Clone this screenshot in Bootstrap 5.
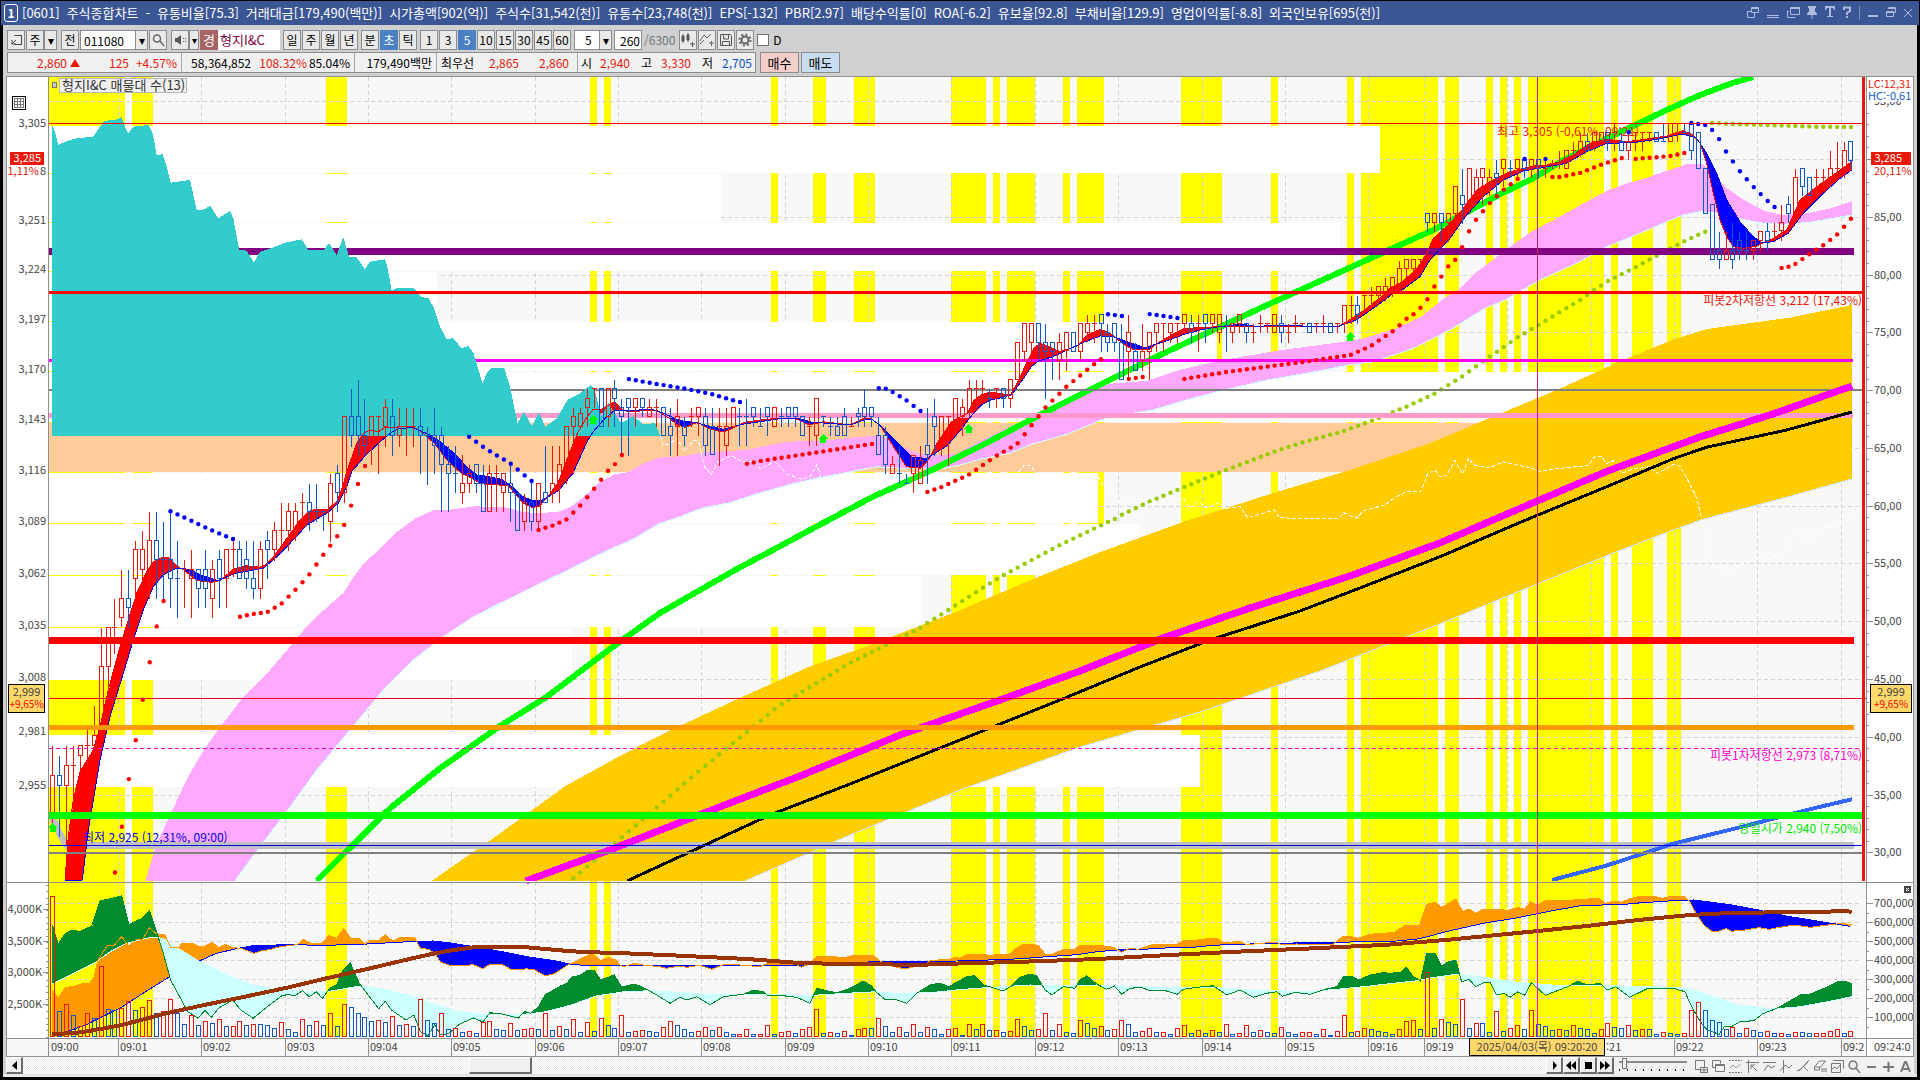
<!DOCTYPE html>
<html lang="ko">
<head>
<meta charset="utf-8">
<meta name="viewport" content="width=device-width, initial-scale=1">
<title>[0601] 주식종합차트</title>
<link rel="stylesheet" href="https://cdn.jsdelivr.net/npm/bootstrap@5.3.0/dist/css/bootstrap.min.css">
<style>
:root{--ui:"Noto Sans CJK KR",sans-serif}
body{background:#000;font-family:var(--ui);font-size:12px;line-height:16px;color:#000;padding:1px 1px 3px}
button,input,select{font-family:inherit;font-size:12px;line-height:16px}
.titlebar{background:#3a5694;color:#fff;height:24px;padding:0 4px 0 3px;font-size:13px}
.titlebar .fields{gap:7px;margin-left:4px;white-space:nowrap}
.titlebar .num{width:14px;height:18px;border:1px solid #fff;border-radius:3px;font-weight:bold;font-size:12px}
.winbtn{background:none;border:0;padding:0;color:#aebbdc;width:20px;height:20px;display:flex;align-items:center;justify-content:center}
.winbtn.w18{width:18px}.winbtn.w16{width:16px}.winbtn.w14{width:14px}
.frame{background:#d0d0d0;margin:0 2px}
.tool{height:27px;padding:5px 3px 2px 4px}
.tb{border:1px solid #8c8c8c;background:#e9e9e9;height:20px;width:18px;padding:0;margin-right:1px;color:#000;display:flex;align-items:center;justify-content:center}
.tb.on{background:#4a80c4;color:#fff;border-color:#4a80c4}
.tb.slim{width:13px;margin-left:-1px}
.tb.thin{width:10px;margin-left:-1px;font-size:10px}
.tf{border:1px solid #8c8c8c;background:#fff;height:20px;padding:0 3px;border-radius:0}
.code{width:56px}.cnt{width:28px;text-align:right;padding:0 1px}
.per{width:38px;appearance:none;padding-left:10px}
.arrowbox{width:13px;height:20px;margin-left:-13px;background:#e9e9e9;border:1px solid #8c8c8c;pointer-events:none}
.gap{width:3px}.gap2{width:2px}
.kind{background:#a86464;color:#fff;width:18px;height:20px;line-height:20px;font-size:13px}
.sname{background:#fff;color:#800040;width:62px;height:20px;line-height:20px;padding-left:2px;font-size:13px}
.quotes{height:22px;padding:0 4px;margin-bottom:2px}
.quotebox{width:749px;height:21px;border:1px solid #8c8c8c;background:#f0f0f0}
.quotebox span{white-space:nowrap;text-align:right}
.up{color:#e8190a}.dn{color:#0f4fc0}
.cut{border-left:1px solid #a8a8a8;height:19px;width:1px}
.order{height:21px;width:39px;border:1px solid #8c8c8c;padding:0;margin-left:4px;color:#000;font-size:13px}
.buy{background:#f4cfc9}.sell{background:#c8dcf0;margin-left:2px}
.chartbox{border:1px solid #909090;background:#fff;margin:0 3px}
.chartbox svg{display:block;width:100%;height:auto}
svg text{font-family:var(--ui)}
.scroller{height:17px;margin:0 3px;background:#f1f1f1}
.raised{background:#f0f0f0;border:1px solid #fff;border-right:2px solid #6c6c6c;border-bottom:2px solid #6c6c6c;padding:0;height:17px;width:17px;display:flex;align-items:center;justify-content:center}
.track{background:repeating-conic-gradient(#fff 0 25%,#ececec 0 50%) 0 0/2px 2px}
.thumb{width:63px;height:17px}
.speed{width:68px;height:14px;appearance:none;background:linear-gradient(#8a8a8a,#8a8a8a) 0 4px/100% 2px no-repeat,repeating-linear-gradient(90deg,#222 0 1px,transparent 1px 8px) 0 12px/100% 2px no-repeat;margin:0 6px 0 5px}
.speed::-webkit-slider-thumb{appearance:none;width:5px;height:11px;background:#f0f0f0;border:1px solid #777;margin-top:-2px}
.ico{background:none;border:0;padding:0;width:17px;height:17px;color:#777}
.foot{height:3px;background:#e8e8e8}
</style>
<script src="https://cdn.jsdelivr.net/npm/bootstrap@5.3.0/dist/js/bootstrap.bundle.min.js"></script>
</head>
<body>
<header class="titlebar d-flex align-items-center">
  <span class="num d-flex align-items-center justify-content-center">1</span>
  <div class="fields d-flex me-auto">
    <span>[0601]</span><span>주식종합차트</span><span>-</span><span>유통비율[75.3]</span><span>거래대금[179,490(백만)]</span><span>시가총액[902(억)]</span><span>주식수[31,542(천)]</span><span>유통수[23,748(천)]</span><span>EPS[-132]</span><span>PBR[2.97]</span><span>배당수익률[0]</span><span>ROA[-6.2]</span><span>유보율[92.8]</span><span>부채비율[129.9]</span><span>영업이익률[-8.8]</span><span>외국인보유[695(천)]</span>
  </div>
  <button class="winbtn" aria-label="분리"><svg width="16" height="16" fill="none" stroke="currentColor"><path d="M6.500 2.500h7v5h-7zM6 3.500h8M2.500 6.500H6M2.500 6v6.500h7V8"/></svg></button>
  <button class="winbtn" aria-label="내리기"><svg width="16" height="16" fill="none" stroke="currentColor"><path d="M2 10.500h12M2 12.500h12"/></svg></button>
  <button class="winbtn" aria-label="복제"><svg width="16" height="16" fill="none" stroke="currentColor"><path d="M5.500 2.500h9v7h-9zM5 3.500h9M2.500 6v6.500h8M2 6.500h2"/></svg></button>
  <button class="winbtn w18" aria-label="고정"><svg width="16" height="16" fill="currentColor"><path d="M4 1h8v2h-1v4h1l1 2v1H3V9l1-2h1V3H4zM7.500 10h1v4h-1z"/></svg></button>
  <button class="winbtn w18" aria-label="글꼴"><svg width="16" height="16" fill="currentColor"><path d="M3 1h10v4h-1l-1-2H9v8h2v1H5v-1h2V3H5L4 5H3z"/></svg></button>
  <button class="winbtn w16" aria-label="도움말"><svg width="14" height="16" fill="none" stroke="currentColor" stroke-width="2"><path d="M4 5V2.500h6V6L7 8v2M7 11v2"/></svg></button>
  <svg width="10" height="16"><path d="M4.500 1v14" stroke="#7f8fae"/></svg>
  <button class="winbtn w16" aria-label="최소화"><svg width="14" height="16" stroke="currentColor" stroke-width="2"><path d="M2 11h10"/></svg></button>
  <button class="winbtn" aria-label="이전 크기"><svg width="16" height="16" fill="none" stroke="currentColor"><path d="M5.500 2.500h7v5h-2M5 3.500h8M3.500 6.500h7v5h-7zM3 7.500h8"/></svg></button>
  <button class="winbtn w14" aria-label="닫기"><svg width="12" height="16" fill="none" stroke="currentColor"><path d="M2 4l8 8M10 4l-8 8"/></svg></button>
</header>
<main class="frame">
  <div class="tool d-flex align-items-center">
    <button class="tb" aria-label="목록"><svg width="14" height="14" fill="none" stroke="#444"><path d="M5.500 2.500h7v9h-7M3 11l4-4M3 7v4h4"/></svg></button>
    <button class="tb">주</button><button class="tb slim" aria-label="종류">▾</button>
    <span class="gap"></span><button class="tb">전</button>
    <input class="tf code" aria-label="종목코드" value="011080"><button class="tb slim" aria-label="종목 목록">▾</button>
    <button class="tb" aria-label="찾기"><svg width="14" height="14" fill="none" stroke="#666" stroke-width="1.500"><circle cx="6" cy="5.500" r="3.500"/><path d="M9 8l4 5"/></svg></button>
    <span class="gap"></span><button class="tb" aria-label="소리"><svg width="14" height="14" fill="#555"><path d="M2 5h2l4-3v10L4 9H2zM10 5h1v1h-1zM10 8h1v1h-1zM12 5h1v1h-1zM12 8h1v1h-1z"/></svg></button><button class="tb thin" aria-label="소리 설정">▾</button>
    <span class="kind text-center">경</span><span class="sname">형지I&amp;C</span>
    <span class="gap"></span><button class="tb">일</button><button class="tb">주</button><button class="tb">월</button><button class="tb">년</button>
    <span class="gap2"></span><button class="tb">분</button><button class="tb on">초</button><button class="tb">틱</button>
    <span class="gap2"></span><button class="tb">1</button><button class="tb">3</button><button class="tb on">5</button><button class="tb">10</button><button class="tb">15</button><button class="tb">30</button><button class="tb">45</button><button class="tb">60</button>
    <span class="gap2"></span><select class="tf per" aria-label="주기"><option>5</option></select><span class="arrowbox d-flex align-items-center justify-content-center">▾</span>
    <span class="gap2"></span><input class="tf cnt" aria-label="봉 개수" value="260"><span class="gap2"></span><span class="me-1 text-secondary">/6300</span>
    <button class="tb" aria-label="차트 추가"><svg width="16" height="16" fill="#555" stroke="#555"><path d="M2 4h2v5H2zM7 3h2v5H7zM3 2v9M8 1v9" /><path d="M10 12h5M12.500 10v5" fill="none"/></svg></button>
    <button class="tb" aria-label="지표 추가"><svg width="16" height="16" fill="none" stroke="#666"><path d="M1 9l4-6 3 3 4-4M1 12l4-4M10 11h5M12.500 9v5"/></svg></button>
    <button class="tb" aria-label="저장"><svg width="14" height="16" fill="none" stroke="#555"><path d="M1.500 2.500h10l1 1v10h-11zM4.500 3v4h5V3M3.500 13V9.500h7V13"/></svg></button>
    <button class="tb" aria-label="설정"><svg width="14" height="16" fill="none" stroke="#666"><circle cx="7" cy="8" r="3.500" stroke-width="2"/><circle cx="7" cy="8" r="5.500" stroke-width="2" stroke-dasharray="2 2.300"/></svg></button>
    <span class="gap2"></span><label class="d-flex align-items-center"><input type="checkbox" class="form-check-input rounded-0 m-0 me-1 border-secondary">D</label>
  </div>
  <div class="quotes d-flex">
    <div class="quotebox d-flex align-items-center">
      <span class="up" style="width:59px">2,860</span><svg width="16" height="12"><path d="M3 10L8 2l5 8z" fill="#e8190a"/></svg><span class="up" style="width:46px">125</span><span class="up" style="width:48px">+4.57%</span><i class="cut ms-1"></i>
      <span style="width:69px">58,364,852</span><span class="up" style="width:56px">108.32%</span><span style="width:43px">85.04%</span><i class="cut ms-1"></i>
      <span style="width:77px">179,490백만</span><i class="cut ms-1"></i>
      <span style="width:37px">최우선</span><span class="up" style="width:45px">2,865</span><span class="up" style="width:50px">2,860</span><i class="cut ms-2"></i>
      <span style="width:14px">시</span><span class="up" style="width:38px">2,940</span><span style="width:22px">고</span><span class="up" style="width:39px">3,330</span><span style="width:22px">저</span><span class="dn" style="width:39px">2,705</span>
    </div>
    <button class="order buy">매수</button><button class="order sell">매도</button>
  </div>
  <div class="chartbox"><svg id="chart" viewBox="7 77 1906 979" role="img" aria-label="형지I&amp;C 5초봉 차트"></svg></div>
  <div class="scroller d-flex align-items-start">
    <button class="raised" aria-label="왼쪽으로"><svg width="9" height="11"><path d="M7 1v9L2 5.500z"/></svg></button>
    <div class="track flex-grow-1 d-flex h-100"><div style="flex:446"></div><div class="raised thumb"></div><div style="flex:1013"></div></div>
    <button class="raised" aria-label="재생"><svg width="11" height="11"><path d="M4 1v9l4-4.500z"/></svg></button>
    <button class="raised" aria-label="뒤로"><svg width="12" height="11"><path d="M6 1v9L1 5.500zM11 1v9L6 5.500z"/></svg></button>
    <button class="raised" aria-label="정지"><svg width="11" height="11"><path d="M2 2h7v7H2z"/></svg></button>
    <button class="raised" aria-label="앞으로"><svg width="12" height="11"><path d="M1 1v9l5-4.500zM6 1v9l5-4.500z"/></svg></button>
    <input type="range" class="speed" aria-label="재생 속도" value="5">
    <span id="icons" class="d-flex"></span>
  </div>
  <div class="foot"></div>
</main>
<script>
const W = (w, d) => `<svg width="15" height="15" viewBox="0 0 15 15" fill="none" stroke="#777" stroke-width="${w}"><path d="${d}"/></svg>`;
document.getElementById('icons').innerHTML = [
  ['새 창', W(1, 'M1.500 1.500h9v7M1.500 1.500v9h5M6.500 8.500h7v5h-7zM10 8.500v5M6.500 11h7')],
  ['겹치기', W(1, 'M1.500 1.500h8v3M1.500 1.500v7h3M4.500 5.500h9v7h-9zM4 6.500h9')],
  ['영역', W(1, 'M1 1.500h13M1 13.500h13M2 9l3-3 3 3 5-4" stroke-dasharray="2 1')],
  ['기준선', W(1, 'M3.500 1v13M1 3.500h13M6 6l6 6M6 10V6h4')],
  ['추세', W(1, 'M1 3.500h13M2 12l4-6 3 3 4-2')],
  ['세로선', W(1, 'M4.500 1v13M1 12l5-6 4 3 3-3')],
  ['연필', W(1, 'M1 12l4-2 8-9M3 12l9-9M8 8l4 4')],
  ['지우개', W(1, 'M1.500 8l5-6h6l-5 6zM1.500 8v3h5V8M9 9v4M11 9v4M13 9v4')],
  ['그림', W(1, 'M3.500 1.500h10v8M1.500 4.500h9v9h-9zM2 10l3-2 2 2 3-4')],
  ['확대경', W(1.500, 'M6 2a4 4 0 1 0 .1 0M9 9l4 5')],
  ['축소', W(2, 'M3 8h9')],
  ['확대', W(2, 'M2 8h11M7.500 3v10')],
  ['글자', W(2, 'M3 13L7 3h1l4 10M5 10h5')]
].map(([n, s]) => `<button class="ico" aria-label="${n}">${s}</button>`).join('');

const out = [];
const RED = '#e8190a', BLUE = '#1058c8';
const cx = i => 52.5 + 6.944 * i;
/* Reads "x,y x,y ..." written on a local scale and returns chart points. */
const pts = (ox, oy, kx, ky, s) => s.trim().split(/\s+/).map(p => { const [x, y] = p.split(',').map(Number); return [ox + x / kx, oy + y / ky]; });
const A = s => pts(0, 460, 3, 3, s), B = s => pts(0, 60, 3, 3, s), C = s => pts(480, 350, 2.8, 3, s),
  D = s => pts(960, 280, 2.8, 3, s), E = s => pts(1400, 0, 3, 3, s), F = s => pts(1440, 280, 3, 2.613, s),
  G = s => pts(0, 870, 2.45, 3, s), H = s => pts(480, 880, 3, 3, s), I = s => pts(930, 880, 3, 3, s),
  J = s => pts(1380, 870, 2.9037, 3, s), P = s => pts(0, 0, 1, 1, s);
const join = a => 'M' + a.map(p => p[0].toFixed(1) + ' ' + p[1].toFixed(1)).join('L');
const add = s => out.push(s);
const rect = (x, y, w, h, f) => add(`<rect x="${x}" y="${y}" width="${w}" height="${h}" fill="${f}"/>`);
const line = (a, c, w, extra = '') => add(`<path d="${join(a)}" fill="none" stroke="${c}" stroke-width="${w}" ${extra}/>`);
const hline = (y, c, w, x2, extra) => line([[49, y], [x2, y]], c, w, extra);
const text = (x, y, s, c = '#444', anchor = 'start', size = 11) => add(`<text x="${x}" y="${y}" fill="${c}" text-anchor="${anchor}" font-size="${size}">${s}</text>`);
function at(a, x) {
  if (x <= a[0][0]) return a[0][1];
  for (let k = 1; k < a.length; k++) if (x <= a[k][0]) { const [p, q] = [a[k - 1], a[k]]; return p[1] + (q[1] - p[1]) * (x - p[0]) / ((q[0] - p[0]) || 1); }
  return a[a.length - 1][1];
}
/* Fills between two lines: one colour where a lies above b, another where it lies below. */
function cloud(a, b, up, down) {
  let u = '', d = '';
  const x2 = Math.min(a[a.length - 1][0], b[b.length - 1][0]);
  for (let x = Math.floor(Math.min(a[0][0], b[0][0])); x < x2; x++) {
    const p = Math.round(at(a, x)), q = Math.round(at(b, x));
    if (p < q) u += `M${x} ${p}h1v${q - p}h-1z`; else if (q < p) d += `M${x} ${q}h1v${p - q}h-1z`;
  }
  if (up) add(`<path d="${u}" fill="${up}"/>`);
  if (down) add(`<path d="${d}" fill="${down}"/>`);
}
function dots(a, c) {
  for (let i = 0; i < 260; i++) { const x = cx(i); if (x >= a[0][0] - 3 && x <= a[a.length - 1][0] + 3) add(`<circle cx="${x.toFixed(1)}" cy="${at(a, x).toFixed(1)}" r="2.2" fill="${c}" shape-rendering="auto"/>`); }
}

/* backgrounds and signal stripes */
rect(49, 77, 1817, 960, '#f8f8f8');
const stripes = [[49,125],[132,153],[326,347],[590,597],[604,611],[771,778],[813,826],[854,875],[951,986],[993,1000],[1007,1035],[1063,1070],[1077,1104],[1181,1222],[1271,1278],[1347,1354],[1361,1438],[1445,1459],[1486,1493],[1500,1507],[1514,1521],[1528,1604],[1611,1618],[1632,1653],[1667,1681]];
stripes.forEach(([a, b]) => rect(a, 77, b - a, 960, '#ffff00'));
/* grid */
const minutes = [[118,'09:01'],[201,'09:02'],[285,'09:03'],[368,'09:04'],[451,'09:05'],[535,'09:06'],[618,'09:07'],[701,'09:08'],[785,'09:09'],[868,'09:10'],[951,'09:11'],[1035,'09:12'],[1118,'09:13'],[1202,'09:14'],[1285,'09:15'],[1368,'09:16'],[1424,'09:19'],[1507,''],[1591,':21'],[1674,'09:22'],[1757,'09:23'],[1841,'09:2']];
const dash = 'stroke-dasharray="4 3"';
minutes.forEach(([x]) => line([[x + .5, 77], [x + .5, 1037]], '#d4d4d4', 1, dash));
for (let v = 30; v <= 95; v += 5) hline(Math.floor(852.8 - 11.555 * (v - 30)) + .5, '#d4d4d4', 1, 1862, dash);
[903,922,941,960,979,998,1017].forEach(y => hline(y + .5, '#d4d4d4', 1, 1862, dash));
/* volume profile */
const rows = [[125,1380],[173,721],[222,1340],[271,437],[321,1217],[371,1600],[422,1520],[472,1098],[523,1139],[575,921],[627,572],[680,49],[734,1200],[787,49]];
rows.slice(0, 13).forEach(([y, x], k) => rect(49, y + 1, x - 49, rows[k + 1][0] - y - 1, k === 6 ? '#ffcb99' : '#fff'));

/* gold and pink clouds */
const goldTop = [...P('431,881 500,833 565,786 612,760 660,735 735,700 808,667 875,643 955,612 1030,580 1100,552 1188,520 1226,508 1276,492 1340,473 1385,458 1424,445'), ...F('0,415 190,345 350,287 540,212 700,155 800,128 1050,98 1236,65')];
const goldBot = [...P('431,881 745,881 850,835 960,790 1080,747 1200,712 1320,671'), ...F('0,898 290,795 530,710 700,653 790,625 1000,577 1236,520')];
const pinkTop = [...A('435,1262 465,1160 500,1085 560,955 610,870 660,800 725,715 800,640 860,570 910,510 965,455 1030,397 1060,350 1090,310 1140,265 1190,215 1245,175 1300,150 1340,150 1430,138'), ...C('0,470 70,472 115,485 160,490 220,485 250,472 290,440 330,400 375,373 415,366 450,343 500,323 570,318 620,308 740,300 860,275 960,272 1050,262 1110,257 1140,265 1180,290 1230,312 1290,315 1330,312'), ...D('0,515 60,480 140,440 210,403 300,365 380,320 430,310 520,303 620,268 720,243 800,228 900,210 1090,183 1130,175 1220,145 1290,110 1360,50'), ...E('120,900 180,865 230,815 290,770 350,725 400,690 460,660 540,615 620,572 680,550 740,533 800,512 860,492 905,492 930,515 980,565 1030,600 1090,632 1145,645 1220,640 1290,625 1355,603')];
const pinkBot = [...A('435,1262 705,1262 780,1160 860,1055 950,930 1050,810 1150,690 1240,600 1330,530 1420,470 1500,430'), ...C('360,600 430,567 500,522 560,500 620,475 700,458 780,430 870,403 930,388 1000,373 1110,350 1180,355 1240,355 1300,355'), ...D('0,555 60,537 140,520 200,493 300,463 400,418 440,407 540,390 640,358 740,330 860,300 980,278 1090,255 1160,245 1270,205 1380,145 1470,85'), ...E('315,900 420,840 530,790 620,740 720,700 800,665 850,645 900,635 960,640 1010,655 1090,670 1150,673 1230,667 1300,655 1355,645')];
cloud(pinkTop, pinkBot, '#fea9fe'); line(pinkBot.slice(1), '#ccffff', 1);
cloud(goldTop, goldBot, '#ffcc00'); line(goldBot.slice(1), '#cce6ff', 1);

/* moving averages */
const green = [...A('950,1262 1170,1045 1320,925 1500,798'), ...P('545,698 618,643 660,613 700,590 735,570'), ...C('820,600 950,525 1100,440 1250,368 1340,320'), ...D('60,497 200,418 400,310 560,225 720,145 860,75 1015,0'), ...E('0,735 100,690 200,637 300,583 400,535 500,475 600,425 700,378 800,330 900,285 1000,248 1060,231')];
line([...A('158,1075 178,1120 200,1156'), [1854, 845.3]], '#c0c0c0', 7);
line([...P('1552,880'), ...F('500,1530 700,1473 900,1430 1100,1385 1236,1357')], '#3366ff', 4);
line(green, '#00ff00', 6);
const dotty = '#99cc00';
dots(P('570,881 640,822 700,770 780,705 850,663 920,628 1000,577 1060,545 1114,519'), dotty);
dots([...D('450,706 530,665 626,622 745,570 880,515 975,482 1070,455 1170,415 1250,380 1327,342 1405,290 1460,247 1560,173'), ...E('540,900 620,845 700,805 768,768 850,725 915,695')], dotty);
dots(E('937,369 1000,372 1100,375 1250,380 1355,381'), dotty);

/* red and blue trend cloud */
const fast = [...A('195,1260 205,1130 220,1020 240,935 280,870 300,800 325,690 360,560 385,480 410,400 440,335 460,305 490,291 510,295 530,318 551,330 592,362 634,367 660,362 700,328 740,317 780,322 800,312 820,290 850,250 900,180 925,155 946,148 980,150 1010,125 1030,75'), ...B('1040,1235 1070,1150 1090,1120 1110,1110 1135,1115 1156,1102 1240,1100 1270,1120 1303,1150 1340,1200 1384,1240 1426,1260'), ...C('0,401 80,407 105,440 125,462 145,472 165,470 190,440 220,395 250,310 275,245 300,200 317,178 340,178 376,155 400,180 416,185 494,180 530,205 553,225 575,232 609,217 640,235 667,243 690,243 740,217 800,208 860,204 890,208 922,225 960,215 1037,225 1076,203 1096,207 1120,225 1155,285 1194,350 1233,355 1255,330 1280,280 1320,215'), ...D('20,400 40,360 60,345 85,336 105,340 141,345 165,300 190,240 210,200 225,190 250,200 280,215 330,197 355,165 393,148 420,160 450,185 480,207 530,208 560,185 600,160 628,145 680,143 720,140 1060,140 1093,118 1130,92 1180,50 1210,20'), ...E('0,850 30,825 55,800 80,760 100,715 150,670 190,625 230,570 270,545 330,515 400,498 440,495 480,485 520,465 570,430 620,418 680,425 720,420 800,408 850,392 880,405 900,430 920,490 940,580 960,660 980,710 1000,740 1030,745 1070,738 1120,715 1160,690 1200,600 1250,560 1300,525 1355,485')];
const slow = [...A('195,1262 247,1260 265,1110 280,1020 300,900 330,770 370,640 400,540 430,450 460,380 490,345 530,325 570,328 610,348 655,362 700,342 740,334 790,325 830,290 880,240 920,195 980,160 1015,130 1040,80'), ...B('1055,1235 1093,1190 1135,1150 1177,1115 1200,1105 1240,1103 1290,1125 1320,1145 1363,1180 1400,1220 1430,1245'), ...C('0,375 60,388 90,410 120,440 150,452 175,450 220,422 260,370 300,275 317,245 350,205 376,182 420,182 480,177 514,190 560,212 600,217 650,230 680,238 740,222 840,206 890,205 930,217 1000,222 1037,225 1080,208 1100,210 1130,235 1180,290 1210,322 1250,325 1275,310 1310,285'), ...D('0,452 30,410 60,375 85,360 120,352 145,343 175,300 200,260 220,243 260,230 300,210 350,185 393,168 430,170 480,190 520,203 540,195 580,182 628,163 680,148 720,141 785,132 830,139 900,136 980,139 1060,139 1110,120 1170,75 1220,35'), ...E('0,875 60,830 90,780 150,715 200,645 250,590 310,540 370,513 440,500 500,490 560,455 620,430 700,428 770,418 850,402 890,415 920,460 950,520 980,600 1020,665 1060,710 1085,728 1120,725 1165,700 1210,640 1270,580 1320,535 1355,510')];
cloud(fast, slow, '#ff0000', '#0000ff');

/* price levels under the ratio area */
hline(251.5, '#800080', 7, 1854);
hline(360.5, '#ff00ff', 3, 1853);
hline(390, '#808080', 2, 1862);
hline(415.5, '#ff99cc', 5, 1853);

/* ratio area and its dashed tail */
const teal = [...B('156,195 165,215 175,255 200,243 230,235 280,230 300,200 315,182 345,180 365,172 375,200 385,220 400,200 445,195 458,220 470,285 488,283 500,320 512,368 570,360 590,450 615,448 630,437 655,475 690,453 700,475 718,570 740,572 762,607 780,575 820,562 860,547 905,538 925,570 970,570 988,550 1010,585 1030,532 1048,592 1070,592 1094,627 1110,605 1155,598 1163,625 1175,692 1190,684 1240,684 1265,712 1285,714 1300,740 1320,800 1340,837 1360,835 1385,865 1405,858 1420,878'), ...C('7,100 20,68 30,55 68,55 85,115 105,220 123,185 145,228 165,188 183,230 215,205 245,150 280,130 310,105 320,115 340,200 360,160 395,220 430,198 455,222 490,220 505,257')];
add(`<path d="${join(teal)}V436H52z" fill="#33cccc"/>`);
const wd = 'stroke-dasharray="4 2"';
line(C('505,257 512,285 530,283 552,265 572,303 600,270 612,275 628,350 648,373 665,335 705,318 735,335 765,333 785,357 825,335 860,372 900,388 925,380 943,345 955,382'), '#fff', 1, wd);
line(D('163,577 180,556 200,556 210,577'), '#fff', 1, wd);
line([...D('386,590 400,615 430,640 455,680 470,655 495,715 510,700 530,670 590,662 625,655 645,685 665,665 690,683 725,668 745,685 785,680 805,713 880,690 895,713 960,716 1060,716 1075,698 1110,715 1130,692 1190,675 1215,655 1250,635 1290,635 1310,580 1330,570'), ...F('0,515 20,510 45,472 68,507 85,467 105,485 150,490 190,475 240,485 270,490 300,500 350,493 445,485 465,460 485,462 500,480 520,472 545,505 575,495 625,488 655,505 700,482 720,487 745,525 770,570 790,640 820,750 880,755 950,725 985,732 1045,700 1068,645 1110,680 1130,652 1195,640 1215,615 1236,625')], '#fff', 1, wd);
line(fast, '#f00000', 1); line(slow, '#0000e0', 1);

/* candles: high, body top, body bottom, low */
const ups = [[0, 460, `855,946,1060,1100r 885,946,976,1128b 855,916,976,1155r 855,916,916,1035r 855,855,886,935r 795,855,855,915r 735,826,856,887r 502,619,797,825r 502,502,619,720r 415,502,502,580r 327,415,472,500r 327,415,442,503b 240,268,356,440r 210,268,328,415r 153,240,328,415r 153,240,298,415b 183,298,298,415b 153,298,355,443b 240,355,355,473b 298,327,327,443r 268,327,355,473r 327,327,386,443b 268,327,386,443b 298,327,415,473r 268,298,355,443b 268,268,355,443r 240,268,268,350r 240,268,355,355b 240,298,355,386b 240,355,386,415b 240,268,386,415r 210,240,268,356b 183,210,268,300r 126,211,211,270r 126,154,211,270r 126,154,211,240r 96,127,127,185r 69,127,153,212b 69,153,153,185b 153,155,155,212b 40,70,185,243r 12,40,97,155b -131,-131,97,128r`],
[43, 60, `984,1069,1126,1158b 957,1069,1126,1185b 1014,1126,1157,1185b 1069,1069,1157,1214r 1069,1069,1069,1241r 1014,1042,1099,1158r 1014,1069,1126,1185b 1041,1099,1126,1158r 1041,1099,1099,1185r 1041,1099,1099,1158r 1041,1099,1126,1241b 1099,1126,1126,1272b 1041,1126,1157,1241b 1099,1126,1214,1355b 1157,1214,1241,1355b 1155,1241,1241,1298b 1182,1270,1298,1329r 1212,1241,1270,1298r 1214,1214,1270,1298b 1212,1270,1355,1355b 1212,1241,1355,1355r 1212,1241,1241,1355r`],
[65, 350, `370,370,428,485r 343,401,427,515b 427,430,541,541b 430,457,515,541r 397,457,515,541b 400,400,515,541r 285,427,457,457b 285,400,427,457r 285,343,400,457r 230,230,343,400r 171,200,230,370r 171,190,230,230r 115,145,171,230r 115,115,115,171r 115,115,230,230b 115,115,200,230r 87,115,145,230b 145,171,200,315b 145,145,171,315b 145,145,171,230r 145,145,171,200b 145,171,200,200r 145,171,171,230r 171,171,256,256b 171,228,256,315b 145,200,230,315r 200,228,256,285b 171,200,200,230r 171,171,200,256r 171,200,285,315b 171,230,313,313b 171,230,230,345r 171,230,285,315r 171,171,230,230r 171,200,200,287b 145,200,200,287b 171,171,200,230b 171,230,230,230b 171,171,200,256b 171,171,230,230r 171,200,200,230b 171,171,200,230b 171,171,200,230b 200,200,256,256b 200,230,230,285r 145,145,256,287r 200,200,200,230b 200,230,230,256b 200,230,256,256b 171,200,256,256b 200,230,230,230r 171,190,200,230b 115,171,200,228b 171,171,200,230b 200,256,313,313b 230,256,343,370b 315,343,370,370r 285,370,370,400b 370,400,400,400b 315,315,370,428r 285,330,400,400r 171,285,313,400b 145,200,228,315b 200,200,285,315r 200,200,200,345r 145,145,230,256r 145,171,200,256r 87,115,187,200r 87,115,115,171r 87,115,115,145r 115,145,145,171b 115,115,115,171r 115,115,145,171b 87,87,145,171r`],
[139, 280, `187,187,297,297r 130,130,214,240r 130,130,187,240r 130,130,187,240b 130,187,214,356b 187,187,214,298b 157,187,240,298r 157,157,210,272r 157,157,214,214b 130,130,214,240r 103,130,157,185r 103,130,130,187r 103,103,130,214b 130,157,187,214b 130,130,187,214b 130,187,298,298b 103,157,214,298r 187,214,272,272b 130,214,240,272r 157,157,214,298r 130,130,157,214r 130,130,130,214r 130,130,157,187r 130,130,130,187r 103,103,130,157r 103,130,157,187b 103,130,130,214r 103,103,130,187b 103,103,130,157r 103,103,157,187r 103,135,135,214b 130,130,157,187r 103,103,130,157r 130,130,157,187b 130,157,157,187r 103,130,130,157r 130,130,130,157r 103,103,157,157r 103,130,157,187b 130,157,157,187r 103,130,130,157r 130,130,130,135r 130,130,157,157b 130,130,130,157r 103,130,130,157r 130,130,157,157b 130,130,130,157r 76,76,130,157r 46,76,76,130r 46,76,103,130b 46,46,46,100r 18,46,46,75r 18,18,46,70r -8,18,46,60r -10,-8,18,50r`],
[194, 0, `780,806,850,870r 778,778,805,830r 778,778,805,825r 778,778,778,805r 640,640,667,695b 640,640,667,695r 640,640,667,723b 640,640,667,723r 559,559,640,665r 504,586,614,670b 505,505,614,640r 505,532,586,614r 505,505,532,614r 505,532,559,586r 478,520,532,586b 478,478,505,559r 478,505,505,532b 478,478,505,532r 478,478,505,532b 478,478,505,532r 478,478,505,532b 478,505,505,532r 478,490,490,505r 450,490,490,505r 450,450,505,505r 424,450,450,478r 397,424,450,470r 397,424,450,450b 397,397,424,450r 397,397,424,424r 397,397,424,450b 370,397,397,450r 397,424,450,450b 397,424,450,478r 397,397,397,450r 397,397,397,450r 397,397,397,424r 397,397,424,424b 370,424,424,424b 370,370,424,424r 370,397,397,424r 370,397,397,397b 370,370,450,478b 397,397,505,505b 505,505,640,640b 613,613,778,778b 694,750,778,805b 694,750,778,778r 667,750,778,805b 694,720,750,778b 694,750,750,778b 720,720,750,778r 694,694,720,750r 667,694,720,750b 667,694,694,720r 613,667,690,720r 586,613,640,667b 505,532,640,640r 505,505,559,586b 532,532,586,586b 505,532,532,586r 505,532,532,559r 450,505,532,559r 424,505,505,532r 424,450,505,532r 424,424,480,505b`]];
const path = { r: '', b: '' };
ups.forEach(([first, oy, s]) => s.split(' ').forEach((t, n) => {
  const k = t.slice(-1), x = Math.floor(cx(first + n)), v = t.slice(0, -1).split(',').map(q => Math.floor(oy + q / 3) + .5);
  path[k] += `M${x + .5} ${v[0]}V${v[1]}M${x + .5} ${v[2]}V${v[3] + .5}`;
  path[k] += v[2] - v[1] < 2 ? `M${x - 2} ${v[1]}h5` : `M${x - 1.5} ${v[1]}h4V${v[2]}h-4z`;
}));
add(`<path d="${path.r}" fill="none" stroke="${RED}"/><path d="${path.b}" fill="none" stroke="${BLUE}"/>`);

/* stop-and-reverse dots */
[A('342,1257 363,1120 384,972 405,855 426,732 447,618 468,507 489,423'), [...A('717,471 760,462 802,456 843,432 886,390 927,345 967,288 1008,234 1029,204 1050,147 1071,81 1092,18')], C('163,540 200,528 240,510 278,470 317,420 356,365 376,345 396,315'), C('745,342 785,333 1096,282'), [...C('1252,426 1290,412 1367,375 1445,318 1504,282 1543,228'), ...D('238,384 297,321 353,272 373,255 393,238')], D('470,297 510,291'), [...D('627,297 745,276 980,243 1093,225 1150,198 1210,155'), ...E('0,975 21,955 50,937 81,900 102,861 123,831 144,800 165,780 186,743 204,699 225,663 267,612 310,570 352,537')], E('457,531 478,531 540,519 600,495 665,474'), E('705,477 811,468 853,459'), E('1143,804 1166,800 1186,792 1229,762 1271,735 1313,702 1334,678 1355,654')].forEach(a => dots(a, '#f00'));
[A('510,153 550,171 613,201 697,237'), [...B('1404,1128 1446,1158'), ...C('5,288 45,315 85,340 124,375 143,393')], C('415,87 494,102 570,115 648,132 726,156'), C('1115,115 1135,115 1155,126 1193,150 1232,183'), D('411,102 451,108'), D('530,102 608,114'), E('373,477 374,477'), E('436,477 437,477'), E('685,397 686,397'), E('873,369 915,375 937,390 957,417 977,453 998,483 1019,513 1061,561 1103,603 1122,621')].forEach(a => dots(a, '#00f'));
[[52.5,828],[593,420],[823,439],[968.5,429],[1350,337]].forEach(([x, y]) => add(`<path d="M${x} ${y - 5}l5 5h-2v4h-6v-4h-2z" fill="#00ff00"/>`));

/* long averages and levels above everything */
line([...P('526,881 615,848 704,813 800,776 900,735 1000,700 1080,671 1163,638 1250,608 1350,576'), ...F('0,687 290,578 500,500 780,410 1000,350 1236,277')], '#ff00ff', 7);
line([...P('627,881 770,815 850,784 960,740 1060,700 1140,667 1210,640 1300,611 1360,588'), ...F('0,723 230,637 500,540 700,467 800,437 1040,392 1236,345')], '#000', 3);
hline(123.5, '#ff0000', 1, 1862); hline(292.5, '#ff0000', 3, 1862);
hline(640.5, '#ff0000', 7, 1854); hline(698.5, '#f00028', 1, 1867);
hline(727.5, '#ff9900', 5, 1854); hline(748.5, '#ff00cc', 1, 1862, 'stroke-dasharray="4 3"');
hline(815.5, '#00ff00', 7, 1862); hline(845.5, '#0000e0', 1, 1862); hline(853, '#808080', 2, 1862);
text(83, 842, '최저 2,925 (12,31%, 09:00)', '#0000e8', 'start', 12); text(1497, 136, '최고 3,305 (-0,61%, 09:21)', RED, 'start', 12);
text(1862, 305, '피봇2차저항선 3,212 (17,43%)', RED, 'end', 12); text(1862, 760, '피봇1차저항선 2,973 (8,71%)', '#ff00cc', 'end', 12); text(1862, 833, '당일시가 2,940 (7,50%)', '#00e800', 'end', 12);
rect(1862, 77, 3, 804, RED);

/* lower pane */
rect(49, 881, 1817, 2, '#f8f8f8');
stripes.forEach(([a, b]) => rect(a, 881, b - a, 2, '#ffff00'));
const oA = [...G('128,360 143,383 160,352 180,350 195,343 205,340 220,340 230,322 240,270 262,228 280,226 298,200 316,228 334,210 350,208 366,173 385,193 403,193 418,232 438,232 447,219 470,219 485,229 502,229 520,217 536,233 552,223 570,233 590,235 622,250 640,243 665,238 680,232 700,228 728,224 742,207 760,220 790,220 805,197 825,205 842,175 860,206 880,206 893,222 906,212 928,210 945,194 962,214 980,202 1015,202 1030,235 1050,238 1065,250 1080,277 1100,285 1130,287 1160,284 1183,296 1200,283 1230,283 1250,297 1270,300 1290,296 1310,300 1337,318 1360,310 1395,282 1410,275 1425,265 1445,254 1455,255 1472,272 1490,262 1510,270'), ...H('415,252 430,260 465,250 490,255 540,260 560,265 600,258 620,262 660,256 695,268 730,254 770,254 840,260 870,246 905,246 950,255 965,262 990,250 1010,228 1050,228 1090,234 1120,226 1180,226 1200,243 1225,256 1275,267 1310,258 1340,250'), ...I('0,242 60,237 75,232 90,235 115,222 160,222 180,228 205,222 235,225 265,200 285,192 310,192 325,197 345,222 370,222 400,208 430,210 450,196 500,196 530,199 550,202 575,217 600,205 625,208 670,193 740,193 765,180 790,183 810,178 860,175 880,187 900,187 930,184 950,195 990,190 1040,187 1055,195 1100,192 1150,195 1210,193 1240,168 1265,170 1285,175 1310,166 1340,160'), ...J('0,190 40,188 75,165 115,165 135,103 160,97 178,112 200,100 220,87 240,125 258,117 278,130 300,117 345,117 370,122 400,112 420,118 438,95 455,105 480,93 560,90 635,85 655,100 680,93 700,97 730,85 760,78 790,78 820,85 850,78 885,80 900,95 920,135 940,165 965,185 985,183 1005,176 1020,184 1060,180 1100,173 1130,178 1200,165 1250,172 1300,165 1345,160 1370,165')];
const oB = [...G('128,497 160,487 210,465 250,440 300,410 350,370 400,332 440,300 490,272 530,250 580,236 620,227 700,224 800,226 900,222 1000,215 1060,213 1110,220 1180,234 1230,245 1300,262 1360,272 1395,282 1430,286'), ...H('415,256 840,257 950,256 1050,252 1165,246 1340,244'), ...I('0,245 80,243 240,238 300,234 380,228 440,224 500,215 560,210 640,208 720,203 790,202 850,196 920,193 1130,188 1320,185'), ...J('0,214 50,213 115,206 200,183 300,160 400,143 500,122 590,106 700,104 760,98 870,91 910,90 1010,103 1100,120 1180,138 1250,150 1310,160 1365,169')];
const gA = [...G('128,165 143,222 160,190 178,180 195,185 225,168 245,93 298,78 316,163 345,147 366,122 385,190 400,250 418,330 440,380 460,425 485,445 502,421 518,442 536,414 570,390 590,420 620,445 655,410 690,378 706,373 722,378 741,362 758,380 775,365 790,385 808,355 825,345 840,300 858,278 880,340 905,380 928,416 944,394 960,421 995,450 1014,435 1030,485 1048,497 1065,465 1080,495 1100,490 1125,463 1160,444 1183,456 1200,428 1230,432 1270,444 1285,424 1300,430 1320,410 1335,375 1370,350 1390,338 1402,320 1420,317 1440,300 1455,300 1472,330 1505,315'), ...H('425,321 465,312 500,328 530,345 570,370 600,352 620,360 650,350 690,374 730,350 790,343 820,330 850,335 865,348 890,345 950,352 990,370 1010,325 1040,332 1070,338 1110,325 1150,303 1175,318 1190,338 1215,358 1250,360 1280,370 1310,340 1345,318'), ...I('0,315 30,309 55,320 75,310 110,290 135,287 160,315 185,322 220,333 245,318 270,292 300,282 320,287 345,330 365,345 400,320 435,325 450,300 470,287 500,312 530,328 553,318 575,343 600,325 635,322 660,333 700,330 742,343 760,328 800,322 850,317 890,345 930,330 970,352 1010,340 1040,335 1057,349 1095,337 1140,343 1185,328 1220,320 1240,290 1265,288 1285,300 1320,285 1360,278'), ...J('30,310 60,307 77,292 95,318 118,333 135,252 160,250 178,288 200,275 220,270 237,335 258,328 278,350 300,338 320,338 338,375 360,370 378,382 400,365 420,376 440,338 480,376 545,350 575,333 600,345 640,340 660,360 685,350 725,382 780,354 850,354 885,365 905,410 930,455 950,480 985,493 1000,470 1020,470 1045,455 1085,452 1110,432 1145,418 1170,405 1220,375 1250,372 1300,350 1330,335 1350,333 1370,342')];
const gB = [...G('128,342 180,310 230,280 270,245 310,220 370,202 400,205 430,230 490,275 560,318 620,345 690,360 750,365 800,365 840,357 880,348 930,355 1000,375 1070,405 1120,424 1180,432 1290,432 1330,427 1400,405 1460,378 1520,367'), ...H('425,336 510,332 600,337 720,345 850,343 1000,346 1100,340 1190,335 1250,340 1340,338'), ...I('0,338 100,328 170,323 300,315 450,318 500,315 700,322 870,323 960,330 1130,335 1220,328 1340,316'), ...J('0,344 110,332 140,325 220,313 270,317 400,337 500,345 700,348 850,352 900,356 960,378 1040,405 1145,417 1220,410 1300,395 1370,380')];
const brown = [...G('128,493 200,487 300,465 400,432 500,405 600,380 700,354 800,325 900,297 1000,268 1050,254 1100,242 1160,232 1290,232 1400,244 1500,249'), ...H('415,219 600,227 800,237 960,249 1130,253 1340,254'), ...I('0,253 320,244 500,237 700,226 900,216 1150,205 1340,196'), ...J('0,226 200,209 450,184 600,168 750,150 900,135 1000,130 1190,126 1360,124 1370,127')];
cloud(oA, oB, '#ff9900', '#0000ff'); line(oB, '#0000ff', 1);
cloud(gA, gB, '#008c2e', '#ccffff'); line(gB, '#ccffff', 1); line(oA, '#ff9900', 1); line(gA, '#008c2e', 1);
const vol = '420r 75b 96r 63b 29r 69r 54b 210r 81b 79b 84r 104r 78b 87r 108r 69b 75r 111r 69b 36b 63r 33b 45r 39b 51r 30b 30r 45r 33b 36r 36b 33b 24b 42r 21b 12b 51r 33b 45r 33b 69r 30b 96r 87b 69b 57b 45b 48r 42b 60r 33b 36r 30b 111r 48b 39b 69r 21b 24r 12b 15r 9b 43r 46r 22b 19b 40r 19b 22r 25r 22b 70r 19b 31r 22b 52r 13b 43r 16b 55r 34b 25b 64r 13b 16r 19r 16b 13b 28r 46r 34b 22b 13b 16r 28r 19b 28r 13b 7b 7r 22r 7b 7r 34r 7b 13r 16r 10b 22r 28r 82r 10b 13r 10b 16r 3b 22r 25r 25b 55r 31b 13b 28r 13b 37r 13b 28r 22b 7b 22r 25r 3b 37r 22b 37r 19b 19r 13b 16r 52r 31b 19b 22r 70r 19b 37r 13b 10b 49r 40b 25b 31r 19b 22r 49r 37b 13b 16r 25r 13b 13r 7b 25r 34r 10b 19r 10b 19r 13b 37r 7b 10r 34r 13b 19r 13b 10b 28r 13b 7b 13r 13r 7b 22r 3b 16r 64r 13b 16r 25r 22b 16b 12b 6b 21r 45r 48r 21b 192r 24b 51r 42b 36b 111r 24b 39r 39b 12b 75r 15b 24r 33r 21b 78r 36b 30b 18b 21r 18b 33r 24b 21b 9b 21r 39r 27b 24b 33r 18b 21r 21b 6b 12r 9b 6b 9r 78r 102r 78b 48b 42b 21b 27r 9b 24r 18b 12b 15r 9b 9r 6b 12r 12b 9b 9r 9r 15r 21r 9b 15r'.split(' ');
const vb = { r: '', b: '' };
vol.forEach((t, i) => { const h = Math.max(1, Math.round(parseInt(t) / 3)), x = Math.floor(cx(i)); vb[t.slice(-1)] += `M${x - 1.5} 1036.500v-${h}h4v${h}z`; });
add(`<path d="${vb.r}" fill="none" stroke="${RED}"/><path d="${vb.b}" fill="none" stroke="${BLUE}"/>`);
line(brown, '#993300', 4);
line([[1537.5, 77], [1537.5, 882]], '#c0206c', 1); line([[1537.5, 882], [1537.5, 1037]], '#ff00ff', 1);

/* axes */
rect(7, 77, 41, 961, '#fff'); rect(1867, 77, 46, 979, '#fff'); rect(7, 1038, 1860, 18, '#f8f8f8');
const AX = '#909090';
line([[48.5, 77], [48.5, 1056]], AX, 1); line([[1866.5, 77], [1866.5, 1056]], AX, 1);
line([[7, 882.5], [1913, 882.5]], AX, 1); line([[7, 1038.5], [1913, 1038.5]], AX, 1);
[[3305,127],[3251,224],[3224,273],[3197,323],[3170,373],[3143,423],[3116,474],[3089,525],[3062,577],[3035,629],[3008,681],[2981,735],[2955,789]].forEach(([v, y]) => text(46, y, v.toLocaleString('en-US'), '#444', 'end'));
for (let k = 0; k <= 65; k++) { const y = Math.floor(852.8 - 11.555 * k) + .5; if (y > 102) line([[1867, y], [k % 5 ? 1869 : 1873, y]], AX, 1); }
for (let v = 30; v <= 95; v += 5) if (v !== 90) text(1874, Math.floor(852.8 - 11.555 * (v - 30)) + 4, v + ',00');
rect(1867, 78, 46, 24, '#fff'); text(1868, 88, 'LC:12,31', RED); text(1868, 100, 'HC:-0,61', BLUE);
text(46, 175, '8', '#444', 'end'); text(39, 175, '1,11%', RED, 'end'); rect(10, 152, 34, 13, RED); text(41, 162, '3,285', '#fff', 'end');
rect(1871, 152, 40, 13, RED); text(1902, 162, '3,285', '#fff', 'end'); text(1874, 175, '20,11%', RED);
[[8.5, 684.5, 36], [1870.5, 684.5, 41]].forEach(([x, y, w]) => { add(`<rect x="${x}" y="${y}" width="${w}" height="28" fill="#ffd86c" stroke="#000"/>`); text(x + w / 2, y + 11, '2,999', '#444', 'middle'); text(x + w / 2, y + 23, '+9,65%', '#f00', 'middle', 10); });
[['4,000K',913],['3,500K',945],['3,000K',976],['2,500K',1008]].forEach(([s, y]) => { text(42, y, s, '#444', 'end'); line([[43, y - 3.5], [48, y - 3.5]], AX, 1); });
for (let y = 885; y < 1037; y += 6.32) line([[46, Math.round(y) + .5], [48, Math.round(y) + .5]], AX, 1);
for (let k = 1; k <= 7; k++) { const y = Math.round(1036.500 - 19.05 * k); text(1874, y + 4, k + '00,000'); line([[1867, y + .5], [1873, y + .5]], AX, 1); line([[1867, y + 10], [1869, y + 10]], AX, 1); }
text(51, 1051, '09:00');
minutes.forEach(([x, s]) => { if (x !== 1507 && x !== 1591) line([[x + .5, 1039], [x + .5, 1056]], AX, 1); text(x === 1591 ? 1606 : x + 2, 1051, s); });
text(1874, 1051, '09:24:0');
add('<rect x="1469.500" y="1038.500" width="135" height="17" fill="#ffd86c" stroke="#000"/>'); text(1537, 1051, '2025/04/03(목) 09:20:20', '#444', 'middle');
add('<rect x="1904" y="886" width="7" height="7" fill="#444"/><path d="M1906 888l3 3M1909 888l-3 3" stroke="#fff"/>');
/* legend and table toggle */
add('<rect x="59.500" y="78.500" width="127" height="14" fill="#f0f0f0" stroke="#b8b8b8"/><rect x="52.500" y="82.500" width="4" height="5" fill="#c8c8c8" stroke="#777"/>');
text(62, 90, '형지I&amp;C 매물대 수(13)', '#333', 'start', 13);
add('<rect x="12.500" y="96.500" width="13" height="13" fill="#fff" stroke="#000"/><path d="M14.500 98.500h9v9h-9zM14 101.500h10M14 104.500h10M17.500 99v8M20.500 99v8" fill="none" stroke="#777"/>');
document.getElementById('chart').innerHTML = `<g shape-rendering="crispEdges">${out.join('')}</g>`;
</script>
</body>
</html>
